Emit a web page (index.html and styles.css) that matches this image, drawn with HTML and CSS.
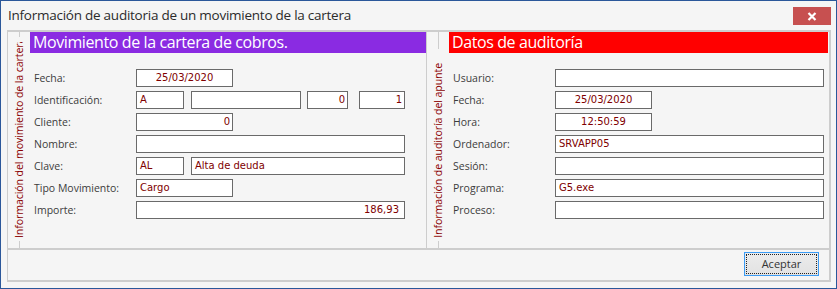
FILE: index.html
```html
<!DOCTYPE html>
<html lang="es">
<head>
<meta charset="utf-8">
<title>Información de auditoria</title>
<link rel="stylesheet" href="styles.css">
</head>
<body>
<div class="window">
  <div class="titlebar">
    <span class="title">Información de auditoria de un movimiento de la cartera</span>
    <button class="close" type="button" aria-label="Cerrar">
      <svg width="10" height="9" viewBox="0 0 10 9"><path d="M1.5 1 L8.5 8 M8.5 1 L1.5 8" stroke="#fff" stroke-width="2.2" fill="none"/></svg>
    </button>
  </div>
  <div class="frame">
    <div class="groups">
      <section class="group group-left">
        <div class="cap">
          <span class="cap-line cap-top-short"></span>
          <div class="cap-wrap"><span class="cap-text">Información del movimiento de la cartera</span></div>
          <span class="cap-line cap-bottom"></span>
        </div>
        <div class="body">
          <div class="header header-purple">Movimiento de la cartera de cobros.</div>
          <div class="rows">
            <div class="row"><span class="lbl">Fecha:</span><div class="fld w97 center">25/03/2020</div></div>
            <div class="row"><span class="lbl">Identificación:</span>
              <div class="fld w48">A</div><div class="fld w110 gap7"></div><div class="fld w41 gap6 right">0</div><div class="fld w46 gap11 right">1</div>
            </div>
            <div class="row"><span class="lbl">Cliente:</span><div class="fld w97 right">0</div></div>
            <div class="row"><span class="lbl">Nombre:</span><div class="fld w269"></div></div>
            <div class="row"><span class="lbl">Clave:</span><div class="fld w48">AL</div><div class="fld w214 gap7">Alta de deuda</div></div>
            <div class="row"><span class="lbl">Tipo Movimiento:</span><div class="fld w97">Cargo</div></div>
            <div class="row"><span class="lbl">Importe:</span><div class="fld w269 right pr5">186,93</div></div>
          </div>
        </div>
      </section>
      <section class="group group-right">
        <div class="cap">
          <span class="cap-line cap-top-long"></span>
          <div class="cap-wrap"><span class="cap-text">Información de auditoría del apunte</span></div>
          <span class="cap-line cap-bottom"></span>
        </div>
        <div class="body">
          <div class="header header-red">Datos de auditoría</div>
          <div class="rows">
            <div class="row"><span class="lbl">Usuario:</span><div class="fld w269"></div></div>
            <div class="row"><span class="lbl">Fecha:</span><div class="fld w97 center">25/03/2020</div></div>
            <div class="row"><span class="lbl">Hora:</span><div class="fld w97 center">12:50:59</div></div>
            <div class="row"><span class="lbl">Ordenador:</span><div class="fld w269">SRVAPP05</div></div>
            <div class="row"><span class="lbl">Sesión:</span><div class="fld w269"></div></div>
            <div class="row"><span class="lbl">Programa:</span><div class="fld w269">G5.exe</div></div>
            <div class="row"><span class="lbl">Proceso:</span><div class="fld w269"></div></div>
          </div>
        </div>
      </section>
    </div>
    <div class="footer">
      <button class="btn" type="button"><span class="btn-focus">Aceptar</span></button>
    </div>
  </div>
</div>
</body>
</html>
```
FILE: styles.css
```css
* { box-sizing: border-box; }
html, body { margin: 0; padding: 0; }
body { background: #f5f5f5; font-family: "Open Sans", "Noto Sans", sans-serif; }

.window {
  width: 837px;
  height: 289px;
  border: 1px solid #2b579a;
  background: #f5f5f5;
  display: flex;
  flex-direction: column;
}

.titlebar {
  height: 29px;
  display: flex;
  align-items: flex-start;
  justify-content: space-between;
}
.title {
  margin-left: 7px;
  margin-top: 5px;
  font-size: 13.5px;
  letter-spacing: -0.25px;
  line-height: 19px;
  color: #2b2b2b;
}
.close {
  margin: 6px 5px 0 0;
  width: 38px;
  height: 18px;
  padding: 0;
  border: none;
  background: #c75050;
  display: flex;
  align-items: center;
  justify-content: center;
}
.close svg { display: block; }

.frame {
  margin-left: 6px;
  width: 824px;
  height: 252px;
  border-top: 2px solid #cdcdcd;
  border-left: 1px solid #cdcdcd;
  border-right: 2px solid #cdcdcd;
  border-bottom: 2px solid #cdcdcd;
  display: flex;
  flex-direction: column;
}

.groups {
  height: 216px;
  display: flex;
}
.group { display: flex; height: 100%; }
.group-left { width: 419px; border-right: 1px solid #cdcdcd; }
.group-right { width: 401px; }

.cap {
  width: 22px;
  display: flex;
  flex-direction: column;
  align-items: center;
}
.cap-line { width: 1px; background: #cdcdcd; flex: none; }
.cap-top-short { height: 5px; }
.cap-top-long { height: 17px; }
.cap-bottom { height: 7px; margin-top: 3px; }
.cap-wrap {
  flex: 1 1 auto;
  min-height: 0;
  margin-top: 5px;
  display: flex;
  flex-direction: column;
  justify-content: flex-end;
  overflow: hidden;
}
.cap-text {
  writing-mode: vertical-rl;
  transform: rotate(180deg);
  white-space: nowrap;
  overflow: hidden;
  min-height: 0;
  flex: 0 1 auto;
  font-size: 10.6px;
  letter-spacing: -0.1px;
  line-height: 14px;
  color: #8b0000;
}

.body { flex: 1; display: flex; flex-direction: column; }
.header {
  height: 21px;
  color: #fff;
  font-size: 16px;
  letter-spacing: -0.4px;
  line-height: 21px;
  padding-left: 3px;
  white-space: nowrap;
}
.header-purple { background: #8a2be2; }
.header-red { background: #ff0000; }

.rows {
  padding: 16px 0 0 4px;
  display: flex;
  flex-direction: column;
  gap: 4px;
}
.row { display: flex; align-items: center; height: 18px; }
.lbl {
  width: 102px;
  flex: none;
  font-size: 10.5px;
  color: #3c3c3c;
  white-space: nowrap;
}
.fld {
  height: 18px;
  flex: none;
  border: 1px solid #6a6a6a;
  background: #fff;
  font-family: "DejaVu Sans", Verdana, sans-serif;
  font-size: 10px;
  line-height: 16px;
  color: #800000;
  padding: 0 3px;
  white-space: nowrap;
  overflow: hidden;
}
.center { text-align: center; }
.right { text-align: right; padding-right: 2px; }
.pr5 { padding-right: 5px; }
.w41 { width: 41px; }
.w46 { width: 46px; }
.w48 { width: 48px; }
.w97 { width: 97px; }
.w110 { width: 110px; }
.w214 { width: 214px; }
.w269 { width: 269px; }
.gap6 { margin-left: 6px; }
.gap7 { margin-left: 7px; }
.gap11 { margin-left: 11px; }

.footer {
  flex: 1;
  border-top: 2px solid #cdcdcd;
  display: flex;
  justify-content: flex-end;
  align-items: flex-start;
  padding: 2px 10px 0 0;
}
.btn {
  width: 75px;
  height: 24px;
  padding: 1px;
  border: 1px solid #3c9cf5;
  background: linear-gradient(#ececec, #e2e2e2);
  font-family: "Open Sans", "Noto Sans", sans-serif;
  font-size: 11px;
  color: #333;
  display: flex;
}
.btn-focus {
  flex: 1;
  border: 1px dotted #222;
  display: flex;
  align-items: center;
  justify-content: center;
  line-height: 14px;
}
```
